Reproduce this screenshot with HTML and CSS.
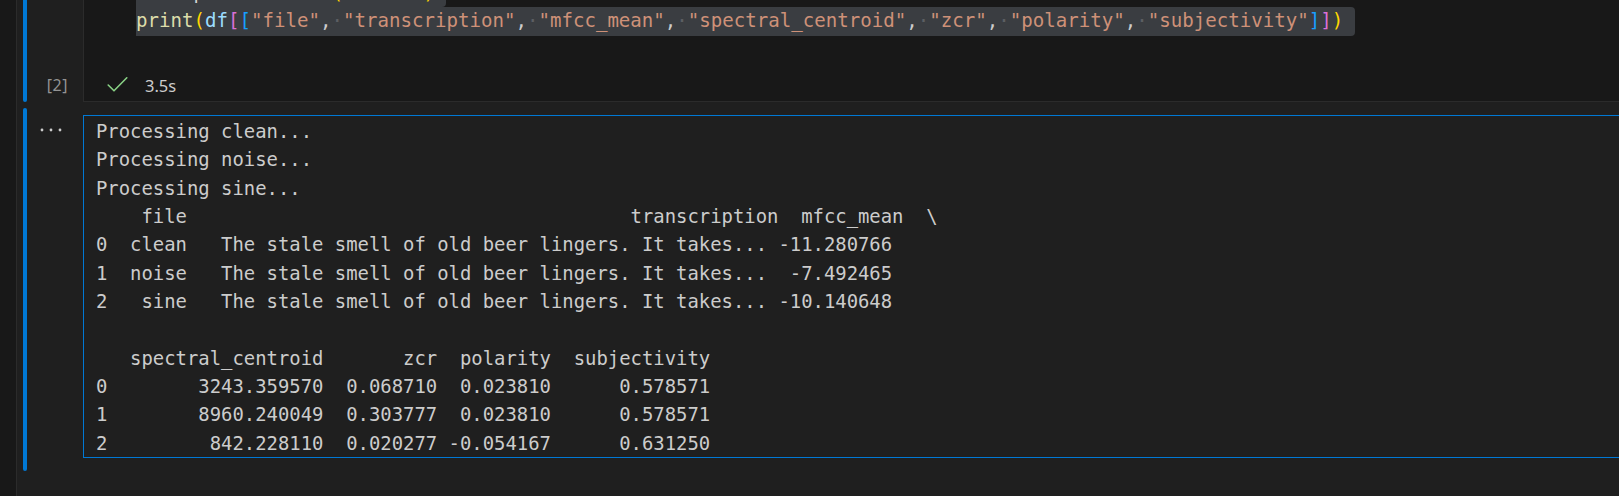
FILE: index.html
```html
<!DOCTYPE html>
<html lang="en">
<head>
<meta charset="utf-8">
<title>Notebook</title>
<link rel="stylesheet" href="styles.css">
</head>
<body>
<div class="app">
  <div class="activity"></div>
  <div class="notebook">
    <section class="cell cell-code">
      <div class="indicator"></div>
      <div class="gutter"><span class="exec-count">[2]</span></div>
      <div class="cell-body code-box">
        <div class="code">
          <div class="line"><span class="sel sel-prev"><span class="var">df</span><span class="ws">·</span><span class="op">=</span><span class="ws">·</span><span class="mod">pd</span><span class="op">.</span><span class="cls">DataFrame</span><span class="b1">(</span><span class="var">results</span><span class="b1">)</span></span></div>
          <div class="line"><span class="sel sel-cur"><span class="fn">print</span><span class="b1">(</span><span class="var">df</span><span class="b2">[</span><span class="b3">[</span><span class="str">"file"</span><span class="op">,</span><span class="ws">·</span><span class="str">"transcription"</span><span class="op">,</span><span class="ws">·</span><span class="str">"mfcc_mean"</span><span class="op">,</span><span class="ws">·</span><span class="str">"spectral_centroid"</span><span class="op">,</span><span class="ws">·</span><span class="str">"zcr"</span><span class="op">,</span><span class="ws">·</span><span class="str">"polarity"</span><span class="op">,</span><span class="ws">·</span><span class="str">"subjectivity"</span><span class="b3">]</span><span class="b2">]</span><span class="b1">)</span></span></div>
        </div>
        <div class="status">
          <svg class="check" width="21" height="17" viewBox="0 0 21 17"><path d="M1.2 9 L7 14.8 L19.8 1.8" fill="none" stroke="#89d185" stroke-width="1.6" stroke-linecap="round" stroke-linejoin="round"/></svg>
          <span class="duration">3.5s</span>
        </div>
      </div>
    </section>
    <section class="cell cell-output">
      <div class="indicator"></div>
      <div class="gutter">
        <svg class="more" width="22" height="4" viewBox="0 0 22 4"><circle cx="2" cy="2" r="1.4" fill="#cccccc"/><circle cx="11" cy="2" r="1.4" fill="#cccccc"/><circle cx="20" cy="2" r="1.4" fill="#cccccc"/></svg>
      </div>
      <div class="cell-body">
<pre class="output">Processing clean...
Processing noise...
Processing sine...
    file                                       transcription  mfcc_mean  \
0  clean   The stale smell of old beer lingers. It takes... -11.280766
1  noise   The stale smell of old beer lingers. It takes...  -7.492465
2   sine   The stale smell of old beer lingers. It takes... -10.140648

   spectral_centroid       zcr  polarity  subjectivity
0        3243.359570  0.068710  0.023810      0.578571
1        8960.240049  0.303777  0.023810      0.578571
2         842.228110  0.020277 -0.054167      0.631250</pre>
      </div>
    </section>
  </div>
</div>
</body>
</html>
```

FILE: styles.css
```css
html, body {
  margin: 0;
  height: 100%;
  background: #1f1f1f;
  overflow: hidden;
}

.app {
  display: flex;
  height: 100%;
}

.activity {
  flex: none;
  width: 16px;
  background: #181818;
  border-right: 1px solid #2b2b2b;
}

.notebook {
  flex: 1;
  min-width: 0;
  overflow: hidden;
  display: flex;
  flex-direction: column;
}

.cell {
  display: flex;
}

.cell-code {
  margin-top: -22px;
}

.cell-output {
  margin-top: 6px;
}

.indicator {
  flex: none;
  width: 4px;
  margin-left: 6px;
  border-radius: 2px;
  background: #0078d4;
}

.gutter {
  flex: none;
  width: 56px;
  display: flex;
  flex-direction: column;
}

.exec-count {
  margin-top: auto;
  margin-bottom: 3px;
  height: 28px;
  line-height: 28px;
  text-align: right;
  padding-right: 15px;
  font-family: "Noto Sans", "DejaVu Sans", sans-serif;
  font-size: 16px;
  letter-spacing: 0.5px;
  color: #939393;
}

.more {
  display: block;
  margin: 20px 0 0 13px;
}

.cell-body {
  flex: 1;
  min-width: 0;
}

.code-box {
  background: #181818;
  border-left: 1px solid #2b2b2b;
  border-bottom: 1px solid #2b2b2b;
  padding-top: 0.5px;
  padding-bottom: 2px;
}

.code {
  padding-left: 52px;
  font-family: "DejaVu Sans Mono", "Liberation Mono", monospace;
  font-size: 19.1px;
  line-height: 28.5px;
  color: #cccccc;
}

.line {
  height: 28.5px;
  white-space: pre;
}

.sel {
  display: inline-block;
  height: 28.5px;
  background: #3a3d41;
  padding-right: 1ch;
}

.sel-prev {
  border-radius: 0 0 4px 0;
}

.sel-cur {
  border-radius: 0 4px 4px 0;
}

.fn { color: #dcdcaa; }
.var { color: #9cdcfe; }
.mod { color: #d4d4d4; }
.cls { color: #4ec9b0; }
.op { color: #cccccc; }
.str { color: #ce9178; }
.ws { color: #5c5f63; }
.b1 { color: #ffd700; }
.b2 { color: #da70d6; }
.b3 { color: #179fff; }

.status {
  margin-top: 35.5px;
  height: 28px;
  display: flex;
  align-items: center;
  padding-left: 23px;
}

.check {
  display: block;
  margin-top: -1px;
}

.duration {
  margin-left: 17px;
  font-family: "Noto Sans", "DejaVu Sans", sans-serif;
  font-size: 16.5px;
  color: #cccccc;
}

.cell-output .cell-body {
  padding-top: 7px;
  padding-bottom: 13px;
}

.output {
  margin: 0 -20px 0 0;
  border: 1px solid #0078d4;
  padding: 1px 0 0 12px;
  font-family: "DejaVu Sans Mono", "Liberation Mono", monospace;
  font-size: 18.9px;
  line-height: 28.33px;
  color: #cccccc;
}
```
